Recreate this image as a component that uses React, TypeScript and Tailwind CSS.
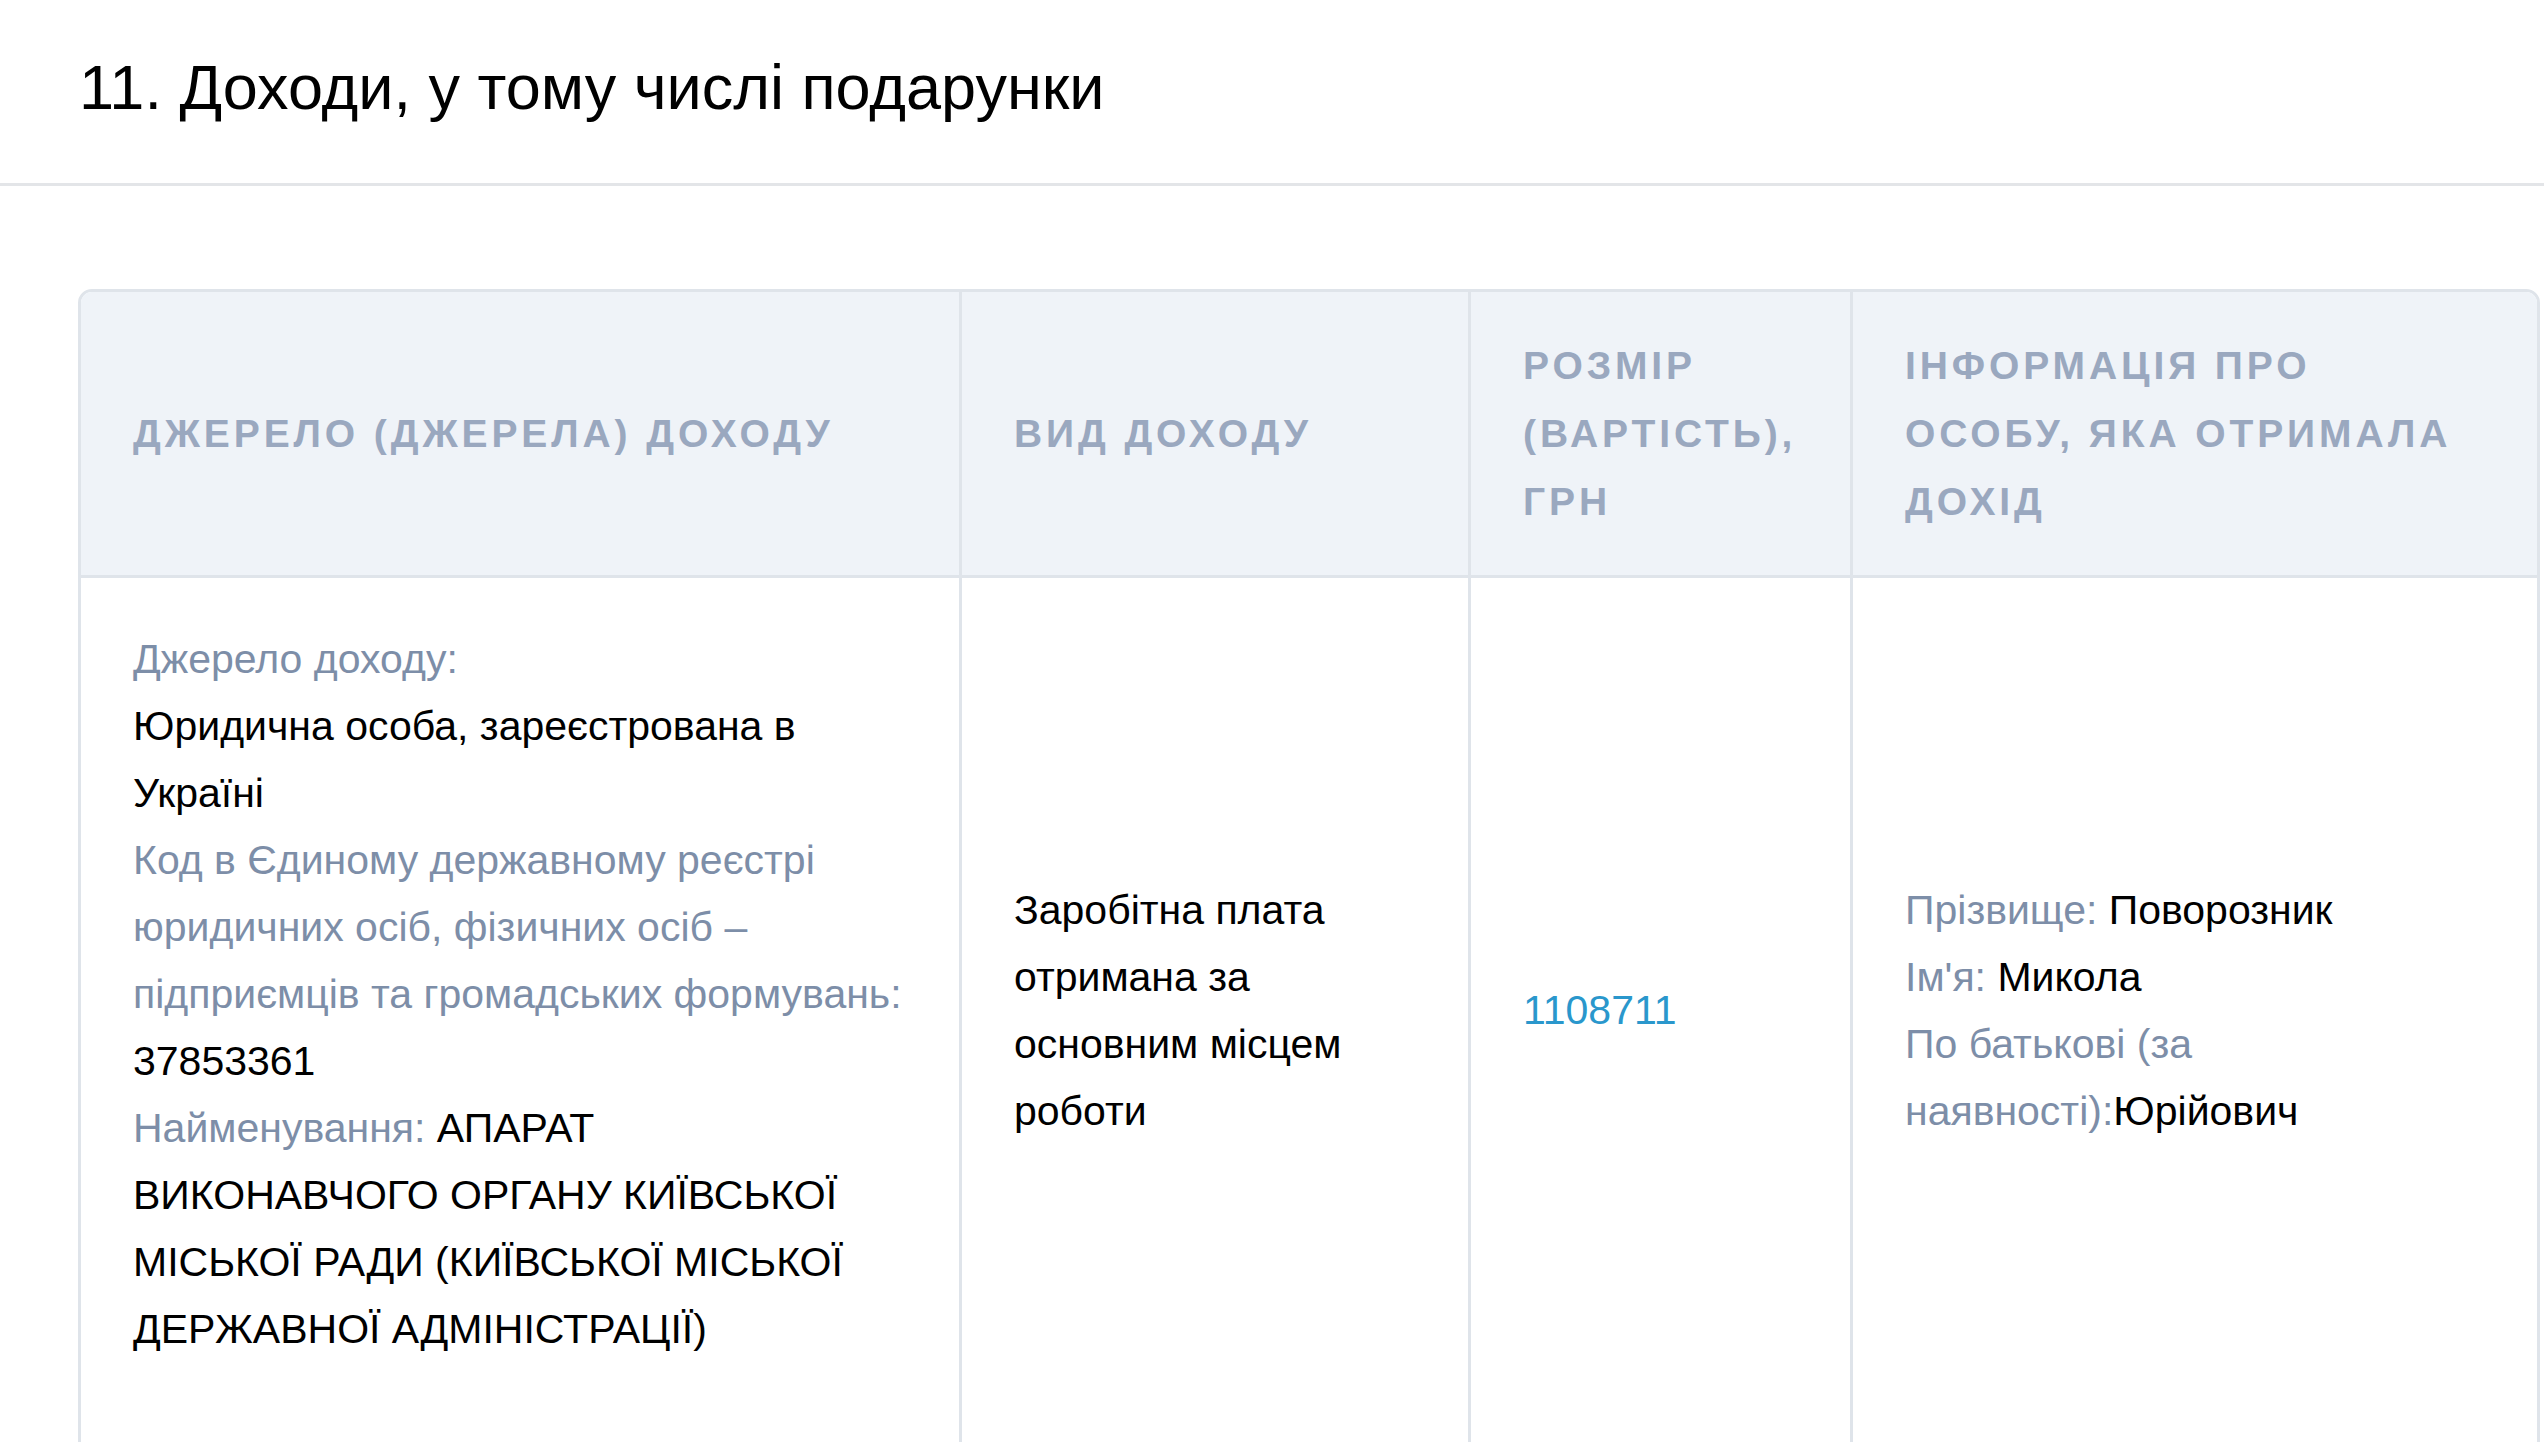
export default function App() {
  const label = "text-[#7d8ea8]";
  const head =
    "px-[52px] flex items-center text-[39px] leading-[68px] font-bold uppercase tracking-[0.1em] text-[#9aa8bf]";
  const cell = "px-[52px] flex items-center text-[41px] leading-[67px]";
  return (
    <div className="w-[2544px] h-[1442px] overflow-hidden bg-white text-black font-[family-name:Liberation_Sans,Arial,sans-serif]">
      <div className="h-[186px] border-b-[3px] border-[#e3e5e8] flex items-center pl-[79px] pb-[8px]">
        <h1 className="text-[63px]">11. Доходи, у тому числі подарунки</h1>
      </div>
      <div className="pt-[103px] pl-[78px] pr-[4px]">
        <div className="grid grid-cols-[881px_509px_382px_1fr] border-[3px] border-[#dfe4ea] rounded-t-[14px] overflow-hidden">
          <div className={`${head} bg-[#eff3f8] h-[286px] border-r-[3px] border-b-[3px] border-[#dfe4ea]`}>Джерело (джерела) доходу</div>
          <div className={`${head} bg-[#eff3f8] border-r-[3px] border-b-[3px] border-[#dfe4ea]`}>Вид доходу</div>
          <div className={`${head} bg-[#eff3f8] border-r-[3px] border-b-[3px] border-[#dfe4ea]`}>Розмір (вартість), грн</div>
          <div className={`${head} bg-[#eff3f8] border-b-[3px] border-[#dfe4ea]`}>Інформація про особу, яка отримала дохід</div>

          <div className={`${cell} pt-[48px] pb-[80px] border-r-[3px] border-[#dfe4ea]`}>
            <div>
              <div className={label}>Джерело доходу:</div>
              <div>Юридична особа, зареєстрована в Україні</div>
              <div>
                <span className={label}>Код в Єдиному державному реєстрі юридичних осіб, фізичних осіб – підприємців та громадських формувань: </span>
                37853361
              </div>
              <div>
                <span className={label}>Найменування: </span>
                АПАРАТ ВИКОНАВЧОГО ОРГАНУ КИЇВСЬКОЇ МІСЬКОЇ РАДИ (КИЇВСЬКОЇ МІСЬКОЇ ДЕРЖАВНОЇ АДМІНІСТРАЦІЇ)
              </div>
            </div>
          </div>
          <div className={`${cell} border-r-[3px] border-[#dfe4ea]`}>
            <div>Заробітна плата отримана за основним місцем роботи</div>
          </div>
          <div className={`${cell} border-r-[3px] border-[#dfe4ea]`}>
            <span className="text-[#2a97cc]">1108711</span>
          </div>
          <div className={cell}>
            <div>
              <div><span className={label}>Прізвище: </span>Поворозник</div>
              <div><span className={label}>Ім'я: </span>Микола</div>
              <div><span className={label}>По батькові (за наявності):</span>Юрійович</div>
            </div>
          </div>
        </div>
      </div>
    </div>
  );
}
